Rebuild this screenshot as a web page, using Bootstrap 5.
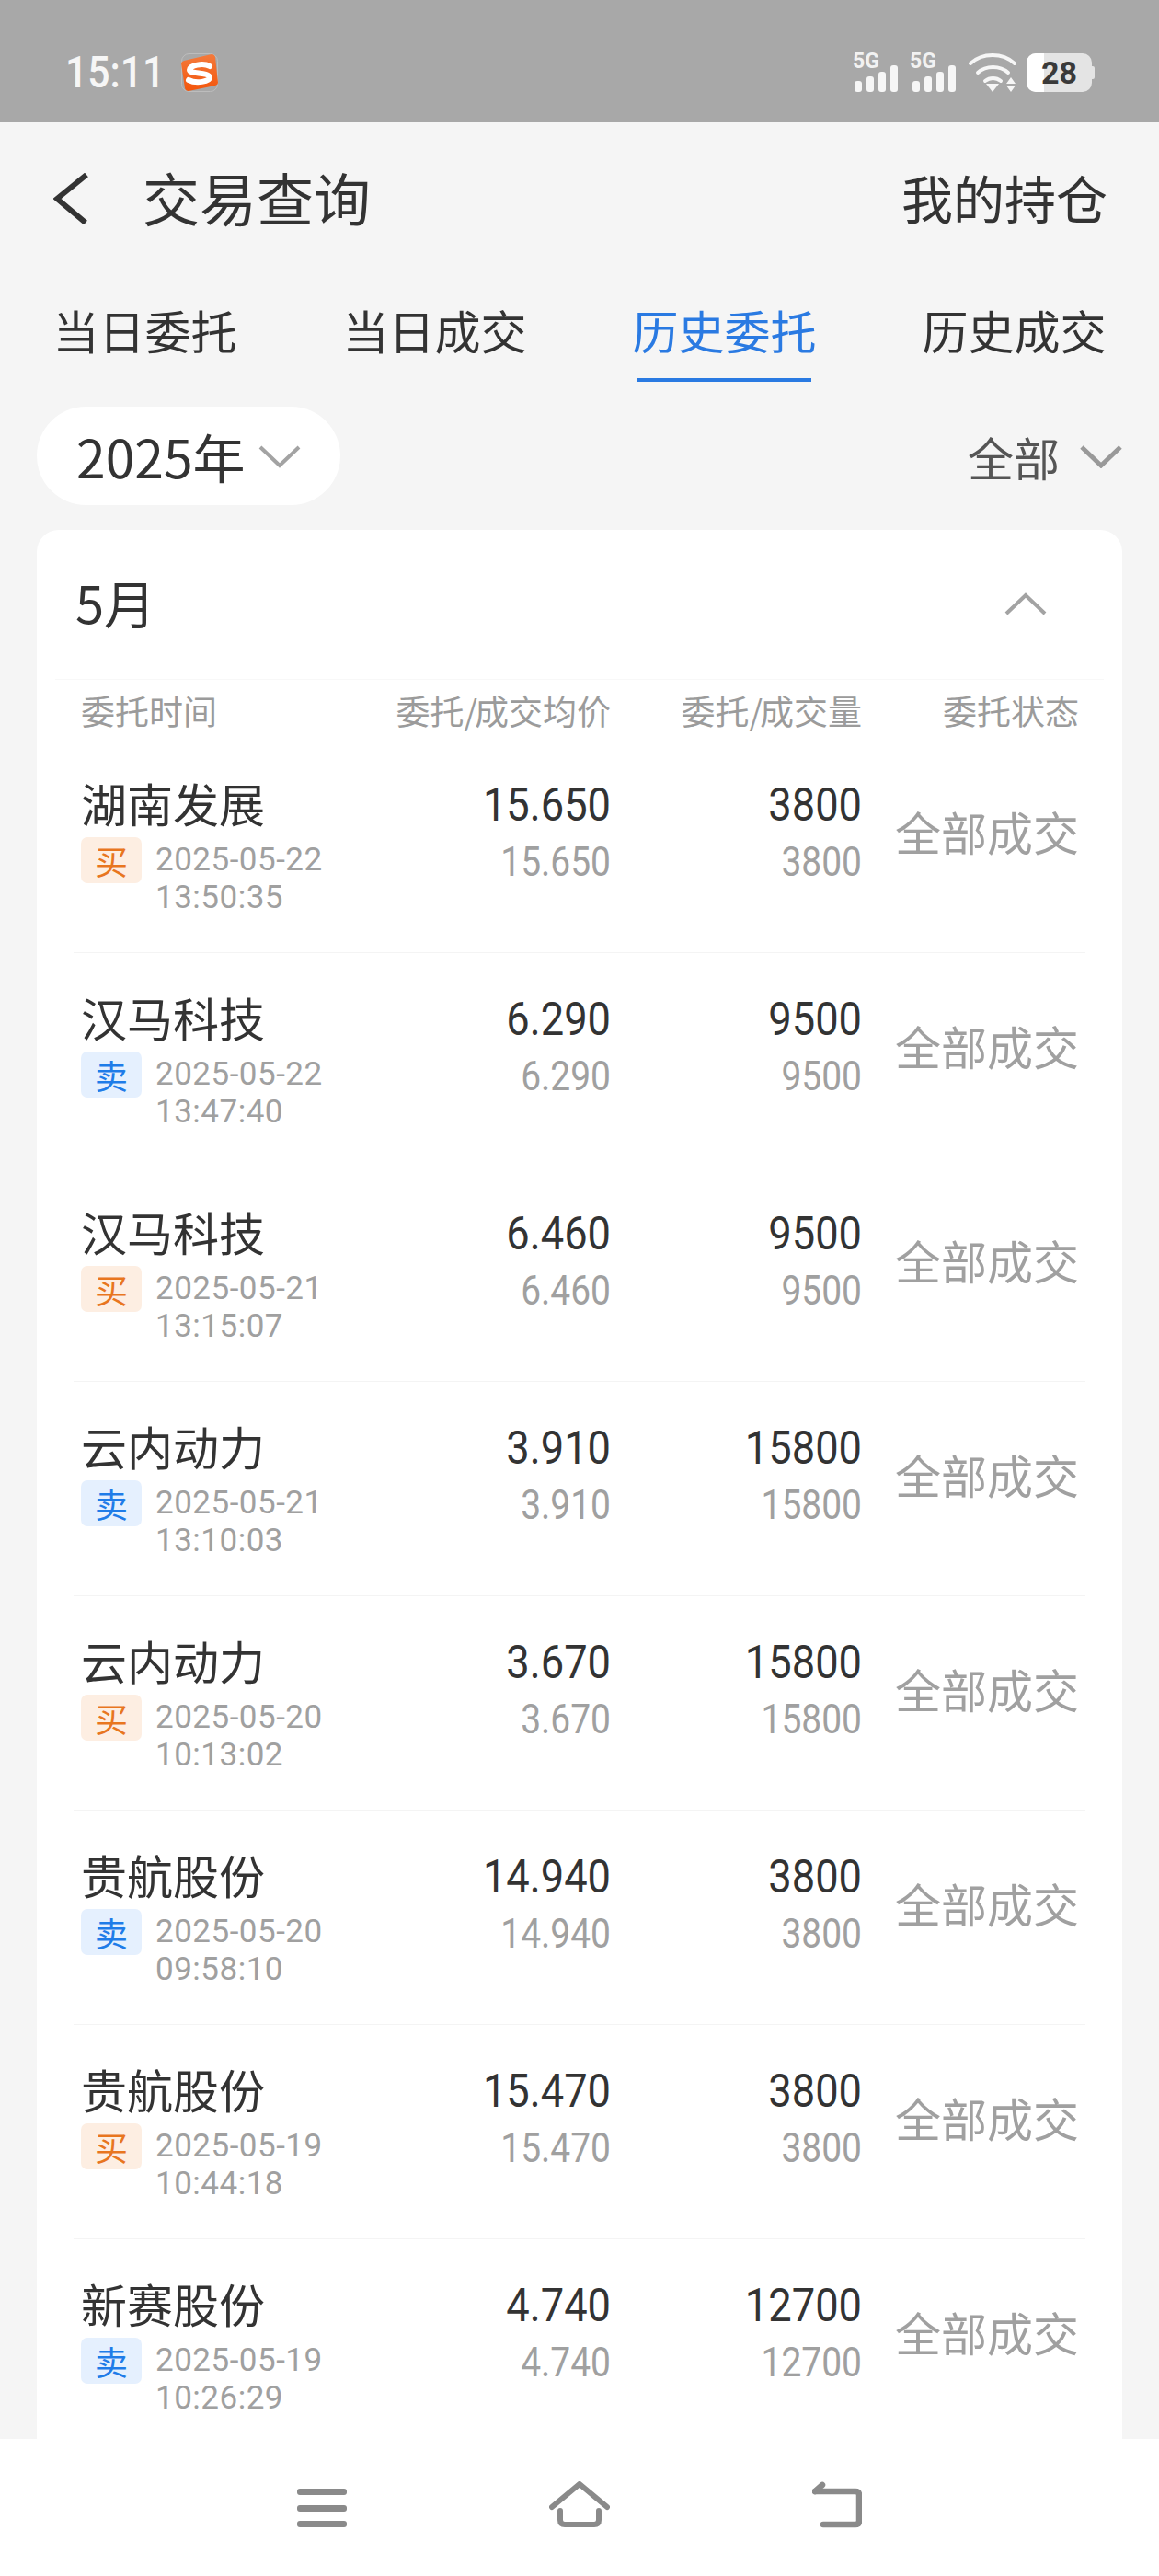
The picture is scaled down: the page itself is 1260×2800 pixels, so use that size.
<!DOCTYPE html>
<html lang="zh-CN">
<head>
    <meta charset="UTF-8">
    <meta name="viewport" content="width=device-width, initial-scale=1.0">
    <title>交易查询</title>
    <link href="https://cdn.jsdelivr.net/npm/bootstrap@5.3.0/dist/css/bootstrap.min.css" rel="stylesheet">
    <style>
        body {
            background-color: #f5f5f5;
            color: #333;
            font-family: "Noto Sans CJK SC", "Liberation Sans", sans-serif;
        }
        .app-shell { height: 2800px; overflow: hidden; }

        /* status bar */
        .status-bar { height: 133px; background-color: #a8a8a8; padding: 24px 70px 0 71px; flex-shrink: 0; }
        .status-time { font-family: "Roboto", sans-serif; font-weight: 500; font-size: 48px; line-height: 1; color: #f6f6f6; margin-right: 4px; transform: scaleX(.89); transform-origin: left center; }
        .ic-sogou { width: 40px; height: 42px; }
        .ic-signal { width: 50px; height: 42px; margin-right: 12px; overflow: visible; }
        .ic-signal.wide { width: 52px; margin-right: 12px; }
        .ic-wifi { width: 51px; height: 42px; margin-right: 12px; }
        .ic-battery { width: 74px; height: 42px; overflow: visible; }
        .signal-label { font-family: "Roboto", sans-serif; font-weight: 700; font-size: 23px; fill: #f2f2f2; }
        .battery-label { font-family: "Roboto", sans-serif; font-weight: 700; font-size: 34px; fill: #3a3a3a; }

        /* title and tabs */
        .title-row { height: 166px; padding: 0 56px 0 58px; flex-shrink: 0; }
        .ic-back { width: 38px; height: 56px; margin-right: 59px; }
        .page-title { font-size: 62px; line-height: 1; margin-bottom: 5px; }
        .holdings-link { font-size: 56px; line-height: 1; margin-bottom: 4px; }
        .tab-row { padding-top: 29px; flex-shrink: 0; }
        .tab-text { font-size: 50px; line-height: 60px; height: 83px; }
        .tab-active .tab-text { color: #2a7ae2; }
        .tab-line { width: 189px; height: 4px; margin: 0 auto; }
        .tab-active .tab-line { background-color: #2a7ae2; }

        /* year / state filters */
        .filter-row { margin: 27px 40px; flex-shrink: 0; }
        .year-pill { height: 107px; width: 330px; padding-left: 43px; }
        .year-pill span { font-size: 57px; line-height: 1; margin-right: 14px; }
        .ic-chev { width: 46px; height: 26px; }
        .state-filter span { font-size: 50px; line-height: 1; color: #555; margin-right: 22px; }

        /* month card */
        .month-card { margin: 0 40px; border-radius: 24px 24px 0 0; flex-grow: 1; min-height: 0; overflow: hidden; }
        .month-head { height: 162px; padding: 0 82px 0 42px; flex-shrink: 0; }
        .month-head span { font-size: 56px; line-height: 1; margin-bottom: 6px; }
        .grid-cols { display: grid; grid-template-columns: 312px 264px 273px 236px; }
        .table-head { height: 65px; margin: 0 20px; padding: 3px 25px 0 28px; border-top: 1px solid #f8f8f8; align-items: center; font-size: 37px; color: #9b9b9b; flex-shrink: 0; }
        .head-slash { letter-spacing: -4px; margin-right: 1px; }
        .order-row { height: 233px; margin: 0 40px; padding: 39px 6px 0 8px; border-bottom: 1px solid #f4f4f4; flex-shrink: 0; }
        .stock-name { font-size: 50px; line-height: 60px; }
        .side-tag { width: 66px; height: 50px; border-radius: 7px; font-size: 36px; line-height: 50px; text-align: center; margin: 8px 15px 0 0; flex-shrink: 0; }
        .side-buy { background-color: #fdeee2; color: #e8761f; }
        .side-sell { background-color: #e5f0fe; color: #1f7ce8; }
        .order-date { font-family: "Roboto", sans-serif; font-size: 35px; line-height: 41px; letter-spacing: .5px; color: #a0a0a0; margin-top: 12px; white-space: nowrap; }
        .num-col { padding-top: 3px; }
        .num-main { font-family: "Roboto", sans-serif; font-size: 50px; line-height: 60px; color: #333; transform: scaleX(.905); transform-origin: right center; }
        .num-sub { font-family: "Roboto", sans-serif; font-size: 45px; line-height: 50px; color: #a0a0a0; margin-top: 7px; transform: scaleX(.865); transform-origin: right center; }
        .order-state { font-size: 50px; line-height: 60px; color: #a0a0a0; padding-top: 31px; white-space: nowrap; }

        /* system navigation */
        .sys-nav { height: 149px; background-color: #fff; padding-top: 46px; flex-shrink: 0; }
        .ic-menu { width: 54px; height: 52px; margin-right: 220px; }
        .ic-home { width: 66px; height: 52px; margin-right: 220px; }
        .ic-return { width: 54px; height: 52px; }
    </style>
</head>
<body>
    <div class="app-shell d-flex flex-column">

        <!-- status bar -->
        <div class="status-bar d-flex align-items-center justify-content-between">
            <div class="d-flex align-items-center">
                <span class="status-time">15:11</span>
                <svg class="ic-sogou" viewBox="0 0 40 42">
                    <defs>
                        <linearGradient id="sogouFill" x1="0" y1="0" x2="0" y2="1">
                            <stop offset="0" stop-color="#f47a3c"/>
                            <stop offset="1" stop-color="#f4560c"/>
                        </linearGradient>
                    </defs>
                    <rect x=".5" y=".5" width="39" height="41" rx="8" fill="none" stroke="#bdbdbd"/>
                    <path d="M3 8 33 1q3 0 4 3l3 28q0 2-3 3L8 41q-3 0-4-3L0 11q0-2 3-3z" fill="url(#sogouFill)"/>
                    <path d="M31 14C24 10 9 13 9 18c0 5 21 2 22 8 0 5-15 7-23 3" fill="none" stroke="#fff" stroke-width="6" stroke-linecap="round"/>
                </svg>
            </div>
            <div class="d-flex align-items-center">
                <svg class="ic-signal" viewBox="0 0 50 42">
                    <text class="signal-label" x="0" y="16">5G</text>
                    <rect x="2" y="30" width="8" height="12" rx="3" fill="#f6f6f6"/>
                    <rect x="15" y="25" width="8" height="17" rx="3" fill="#f6f6f6"/>
                    <rect x="28" y="20" width="8" height="22" rx="3" fill="#f6f6f6"/>
                    <rect x="41" y="13" width="8" height="29" rx="3" fill="#f6f6f6"/>
                </svg>
                <svg class="ic-signal wide" viewBox="0 0 52 42">
                    <text class="signal-label" x="0" y="16">5G</text>
                    <rect x="3" y="30" width="8" height="12" rx="3" fill="#f6f6f6"/>
                    <rect x="16" y="25" width="8" height="17" rx="3" fill="#f6f6f6"/>
                    <rect x="29" y="20" width="8" height="22" rx="3" fill="#f6f6f6"/>
                    <rect x="42" y="13" width="8" height="29" rx="3" fill="#f6f6f6"/>
                </svg>
                <svg class="ic-wifi" viewBox="0 0 51 42">
                    <g fill="none" stroke="#f6f6f6" stroke-width="4" stroke-linecap="round">
                        <path d="M2 11C15-1 37-1 50 11"/>
                        <path d="M10 21c9-8 24-8 33 0"/>
                        <path d="M18 30c5-4 12-4 17 0"/>
                    </g>
                    <path d="M19 33h14l-7 9z" fill="#f6f6f6"/>
                    <path d="M41 33l5-7 5 7zM41 35h10l-5 7z" fill="#f6f6f6"/>
                </svg>
                <svg class="ic-battery" viewBox="0 0 74 42">
                    <rect width="71" height="42" rx="10" fill="#e4e4e4"/>
                    <path d="M71 14h1q2 0 2 2v10q0 2-2 2h-1z" fill="#e4e4e4"/>
                    <path d="M19 0H10A10 10 0 0 0 0 10v22a10 10 0 0 0 10 10h9z" fill="#fff"/>
                    <text class="battery-label" x="16" y="33">28</text>
                </svg>
            </div>
        </div>

        <!-- title -->
        <div class="title-row d-flex align-items-center justify-content-between">
            <div class="d-flex align-items-center">
                <svg class="ic-back" viewBox="0 0 38 56">
                    <path d="M36 2 4 28l31 26" fill="none" stroke="#333" stroke-width="6"/>
                </svg>
                <span class="page-title">交易查询</span>
            </div>
            <span class="holdings-link">我的持仓</span>
        </div>

        <!-- tabs -->
        <div class="tab-row row g-0">
            <div class="col-3 text-center"><div class="tab-text">当日委托</div><div class="tab-line"></div></div>
            <div class="col-3 text-center"><div class="tab-text">当日成交</div><div class="tab-line"></div></div>
            <div class="col-3 text-center tab-active"><div class="tab-text">历史委托</div><div class="tab-line"></div></div>
            <div class="col-3 text-center"><div class="tab-text">历史成交</div><div class="tab-line"></div></div>
        </div>

        <!-- filters -->
        <div class="filter-row d-flex align-items-center justify-content-between">
            <div class="year-pill bg-white rounded-pill d-flex align-items-center">
                <span>2025年</span>
                <svg class="ic-chev" viewBox="0 0 46 26"><path d="M2 3l21 20L44 3" fill="none" stroke="#a3a3a3" stroke-width="4"/></svg>
            </div>
            <div class="state-filter d-flex align-items-center">
                <span>全部</span>
                <svg class="ic-chev" viewBox="0 0 46 26"><path d="M2 3l21 20L44 3" fill="none" stroke="#999" stroke-width="5"/></svg>
            </div>
        </div>

        <!-- orders of the month -->
        <div class="month-card card border-0 bg-white">
            <div class="month-head d-flex align-items-center justify-content-between">
                <span>5月</span>
                <svg class="ic-chev" viewBox="0 0 46 26"><path d="M2 23 23 3l21 20" fill="none" stroke="#a3a3a3" stroke-width="4"/></svg>
            </div>
            <div class="table-head grid-cols">
                <div>委托时间</div>
                <div class="text-end">委托<span class="head-slash">/</span>成交均价</div>
                <div class="text-end">委托<span class="head-slash">/</span>成交量</div>
                <div class="text-end">委托状态</div>
            </div>

            <div class="order-row grid-cols">
                <div>
                    <div class="stock-name">湖南发展</div>
                    <div class="d-flex"><div class="side-tag side-buy">买</div><div class="order-date">2025-05-22<br>13:50:35</div></div>
                </div>
                <div class="text-end num-col"><div class="num-main">15.650</div><div class="num-sub">15.650</div></div>
                <div class="text-end num-col"><div class="num-main">3800</div><div class="num-sub">3800</div></div>
                <div class="text-end order-state">全部成交</div>
            </div>
            <div class="order-row grid-cols">
                <div>
                    <div class="stock-name">汉马科技</div>
                    <div class="d-flex"><div class="side-tag side-sell">卖</div><div class="order-date">2025-05-22<br>13:47:40</div></div>
                </div>
                <div class="text-end num-col"><div class="num-main">6.290</div><div class="num-sub">6.290</div></div>
                <div class="text-end num-col"><div class="num-main">9500</div><div class="num-sub">9500</div></div>
                <div class="text-end order-state">全部成交</div>
            </div>
            <div class="order-row grid-cols">
                <div>
                    <div class="stock-name">汉马科技</div>
                    <div class="d-flex"><div class="side-tag side-buy">买</div><div class="order-date">2025-05-21<br>13:15:07</div></div>
                </div>
                <div class="text-end num-col"><div class="num-main">6.460</div><div class="num-sub">6.460</div></div>
                <div class="text-end num-col"><div class="num-main">9500</div><div class="num-sub">9500</div></div>
                <div class="text-end order-state">全部成交</div>
            </div>
            <div class="order-row grid-cols">
                <div>
                    <div class="stock-name">云内动力</div>
                    <div class="d-flex"><div class="side-tag side-sell">卖</div><div class="order-date">2025-05-21<br>13:10:03</div></div>
                </div>
                <div class="text-end num-col"><div class="num-main">3.910</div><div class="num-sub">3.910</div></div>
                <div class="text-end num-col"><div class="num-main">15800</div><div class="num-sub">15800</div></div>
                <div class="text-end order-state">全部成交</div>
            </div>
            <div class="order-row grid-cols">
                <div>
                    <div class="stock-name">云内动力</div>
                    <div class="d-flex"><div class="side-tag side-buy">买</div><div class="order-date">2025-05-20<br>10:13:02</div></div>
                </div>
                <div class="text-end num-col"><div class="num-main">3.670</div><div class="num-sub">3.670</div></div>
                <div class="text-end num-col"><div class="num-main">15800</div><div class="num-sub">15800</div></div>
                <div class="text-end order-state">全部成交</div>
            </div>
            <div class="order-row grid-cols">
                <div>
                    <div class="stock-name">贵航股份</div>
                    <div class="d-flex"><div class="side-tag side-sell">卖</div><div class="order-date">2025-05-20<br>09:58:10</div></div>
                </div>
                <div class="text-end num-col"><div class="num-main">14.940</div><div class="num-sub">14.940</div></div>
                <div class="text-end num-col"><div class="num-main">3800</div><div class="num-sub">3800</div></div>
                <div class="text-end order-state">全部成交</div>
            </div>
            <div class="order-row grid-cols">
                <div>
                    <div class="stock-name">贵航股份</div>
                    <div class="d-flex"><div class="side-tag side-buy">买</div><div class="order-date">2025-05-19<br>10:44:18</div></div>
                </div>
                <div class="text-end num-col"><div class="num-main">15.470</div><div class="num-sub">15.470</div></div>
                <div class="text-end num-col"><div class="num-main">3800</div><div class="num-sub">3800</div></div>
                <div class="text-end order-state">全部成交</div>
            </div>
            <div class="order-row grid-cols">
                <div>
                    <div class="stock-name">新赛股份</div>
                    <div class="d-flex"><div class="side-tag side-sell">卖</div><div class="order-date">2025-05-19<br>10:26:29</div></div>
                </div>
                <div class="text-end num-col"><div class="num-main">4.740</div><div class="num-sub">4.740</div></div>
                <div class="text-end num-col"><div class="num-main">12700</div><div class="num-sub">12700</div></div>
                <div class="text-end order-state">全部成交</div>
            </div>
        </div>

        <!-- system navigation -->
        <div class="sys-nav d-flex justify-content-center">
            <svg class="ic-menu" viewBox="0 0 54 52">
                <g fill="#8a8a8a">
                    <rect y="8" width="54" height="7" rx="3"/>
                    <rect y="26" width="54" height="7" rx="3"/>
                    <rect y="43" width="54" height="7" rx="3"/>
                </g>
            </svg>
            <svg class="ic-home" viewBox="0 0 66 52">
                <g fill="none" stroke="#8a8a8a" stroke-width="6" stroke-linecap="round" stroke-linejoin="round">
                    <path d="M3 28 33 3l30 25"/>
                    <path d="M12 32v10q0 5 5 5h32q5 0 5-5V32"/>
                </g>
            </svg>
            <svg class="ic-return" viewBox="0 0 54 52">
                <g fill="none" stroke="#8a8a8a" stroke-width="6.5" stroke-linecap="round" stroke-linejoin="round">
                    <path d="M3 11h44q4 0 4 4v28q0 4-4 4H12"/>
                    <path d="M3 11l8-7"/>
                </g>
            </svg>
        </div>
    </div>

    <script src="https://cdn.jsdelivr.net/npm/bootstrap@5.3.0/dist/js/bootstrap.bundle.min.js"></script>
</body>
</html>
